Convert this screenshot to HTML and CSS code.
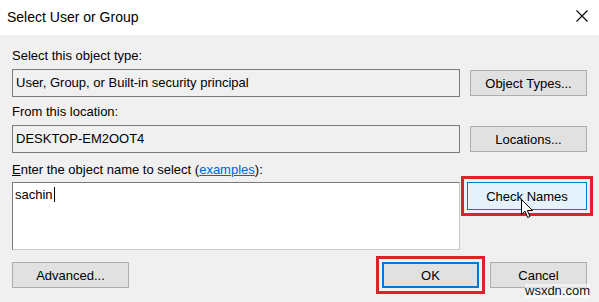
FILE: index.html
```html
<!DOCTYPE html>
<html lang="en">
<head>
    <meta charset="UTF-8">
    <title>Select User or Group</title>
    <link rel="stylesheet" href="styles.css">
</head>
<body>
    <div class="dialog">
        <div class="titlebar">
            <span class="title">Select User or Group</span>
            <svg class="close" width="12" height="12" viewBox="0 0 12 12">
                <path d="M0.5 0.5 L11.5 11.5 M11.5 0.5 L0.5 11.5" stroke="#000" stroke-width="1.1" fill="none"/>
            </svg>
        </div>
        <div class="body">
            <div class="label">Select this object type:</div>
            <div class="row">
                <div class="field">User, Group, or Built-in security principal</div>
                <button class="btn">Object Types...</button>
            </div>
            <div class="label">From this location:</div>
            <div class="row">
                <div class="field">DESKTOP-EM2OOT4</div>
                <button class="btn">Locations...</button>
            </div>
            <div class="label label-name"><u>E</u>nter the object name to select (<a href="#">examples</a>):</div>
            <div class="row row-top">
                <div class="names">sachin<span class="caret"></span></div>
                <div class="highlight hl-check">
                    <button class="btn btn-hover">Check Names</button>
                </div>
            </div>
            <div class="footer">
                <button class="btn">Advanced...</button>
                <div class="footer-right">
                    <div class="highlight hl-ok">
                        <button class="btn btn-default">OK</button>
                    </div>
                    <button class="btn">Cancel</button>
                </div>
            </div>
        </div>
        <svg class="pointer" width="13" height="20" viewBox="0 0 13 20">
            <path d="M0.5 0.5 L0.5 15.5 L4 12.2 L6.6 18.5 L9 17.5 L6.4 11.5 L11.5 11.5 Z" fill="#fff" stroke="#000" stroke-width="1"/>
        </svg>
        <div class="watermark">wsxdn.com</div>
    </div>
</body>
</html>
```
FILE: styles.css
```css
* {
    box-sizing: border-box;
}
body {
    margin: 0;
    font-family: "Liberation Sans", Arial, sans-serif;
    font-size: 13px;
    color: #000;
    background: #f0f0f0;
}
.dialog {
    position: relative;
    width: 599px;
    height: 302px;
    background: #f0f0f0;
    overflow: hidden;
}
.titlebar {
    height: 35px;
    background: #fff;
    display: flex;
    align-items: center;
    justify-content: space-between;
    padding: 0 11px 0 7px;
}
.title {
    font-size: 14px;
    margin-top: -2px;
}
.close {
    margin-top: -3px;
}
.body {
    padding: 12px 12px 0 12px;
}
.label {
    height: 22px;
    line-height: 18px;
}
.label-name {
    margin-top: 8px;
    height: 21px;
}
.label a {
    color: #0066cc;
}
.row {
    display: flex;
    align-items: center;
    justify-content: space-between;
    margin-bottom: 6px;
}
.row-top {
    align-items: flex-start;
    margin-bottom: 6px;
}
.field {
    width: 448px;
    height: 28px;
    border: 1px solid #7a7a7a;
    padding: 5px 0 0 3px;
}
.btn {
    width: 117px;
    height: 26px;
    background: #e1e1e1;
    border: 1px solid #adadad;
    font-family: inherit;
    font-size: 13px;
    color: #000;
    padding: 0;
}
.names {
    width: 448px;
    height: 68px;
    background: #fff;
    border: 1px solid #c8c8c8;
    border-top-color: #7a7a7a;
    border-left-color: #7a7a7a;
    padding: 4px 0 0 2px;
}
.caret {
    display: inline-block;
    width: 1px;
    height: 15px;
    background: #000;
    vertical-align: -3px;
    margin-left: 1px;
}
.highlight {
    border: 3px solid #e0202a;
}
.hl-check {
    margin: -6px -6px 0 0;
    padding: 3px;
}
.btn-hover {
    display: block;
    width: 120px;
    height: 28px;
    background: #e5f1fb;
    border-color: #0078d7;
}
.footer {
    display: flex;
    justify-content: space-between;
    align-items: center;
}
.footer-right {
    display: flex;
    align-items: center;
    gap: 5px;
}
.hl-ok {
    padding: 3px;
}
.btn-default {
    display: block;
    width: 97px;
    height: 26px;
    border: 2px solid #0078d7;
}
.footer-right > .btn {
    width: 97px;
}
.pointer {
    position: absolute;
    left: 521px;
    top: 199px;
}
.watermark {
    position: absolute;
    left: 525px;
    top: 284px;
    font-size: 13px;
    color: #111;
    background: rgba(255, 255, 255, 0.55);
    line-height: 14px;
}
```
